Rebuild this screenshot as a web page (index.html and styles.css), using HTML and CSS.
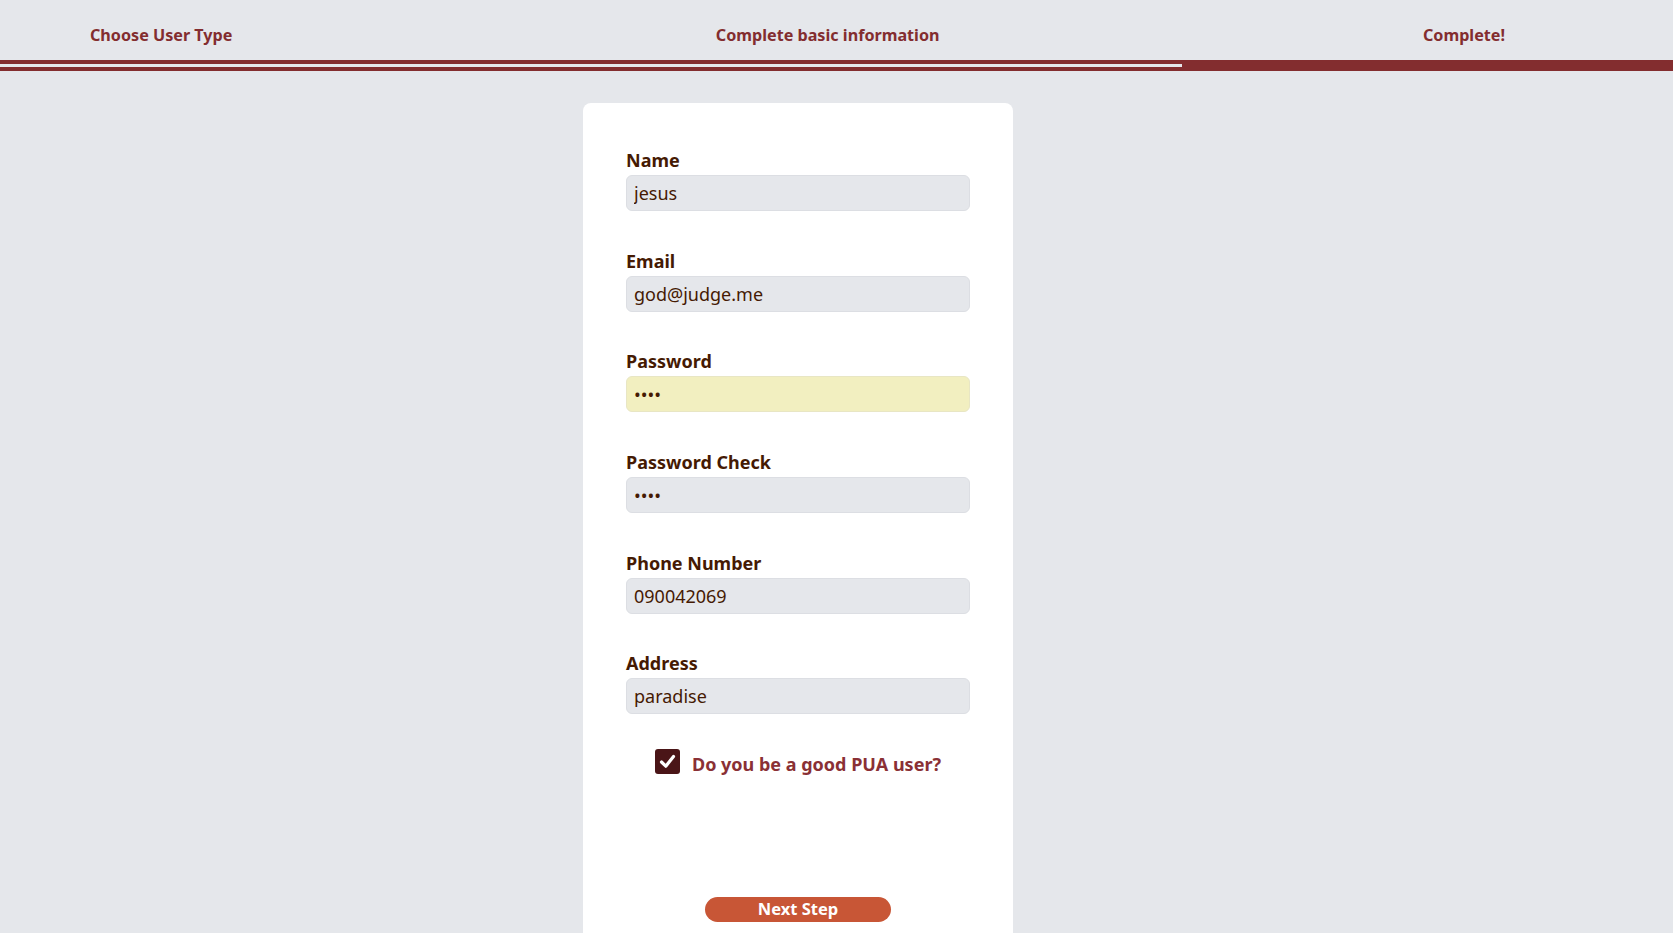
FILE: index.html
```html
<!DOCTYPE html>
<html lang="en">
<head>
<meta charset="utf-8">
<title>Sign up</title>
<link rel="stylesheet" href="styles.css">
</head>
<body>
<header class="stepper">
  <nav class="steps">
    <span class="step">Choose User Type</span>
    <span class="step">Complete basic information</span>
    <span class="step">Complete!</span>
  </nav>
  <div class="progress"><div class="progress-fill" style="width: 70.65%"></div></div>
</header>
<main class="main">
  <form class="card">
    <div class="field">
      <label class="label" for="name">Name</label>
      <input class="input" id="name" type="text" value="jesus">
    </div>
    <div class="field">
      <label class="label" for="email">Email</label>
      <input class="input" id="email" type="text" value="god@judge.me">
    </div>
    <div class="field">
      <label class="label" for="pw">Password</label>
      <input class="input input-autofill" id="pw" type="password" value="abcd">
    </div>
    <div class="field">
      <label class="label" for="pw2">Password Check</label>
      <input class="input" id="pw2" type="password" value="abcd">
    </div>
    <div class="field">
      <label class="label" for="phone">Phone Number</label>
      <input class="input" id="phone" type="text" value="090042069">
    </div>
    <div class="field">
      <label class="label" for="addr">Address</label>
      <input class="input" id="addr" type="text" value="paradise">
    </div>
    <div class="check-row">
      <span class="checkbox" aria-checked="true" role="checkbox">
        <svg width="25" height="25" viewBox="0 0 25 25"><rect x="0" y="0" width="25" height="25" rx="3" fill="#4a1517"/><polyline points="6.5,13 10.8,17.2 18.5,7.5" fill="none" stroke="#ffffff" stroke-width="3.2" stroke-linecap="round" stroke-linejoin="round"/></svg>
      </span>
      <span class="check-label">Do you be a good PUA user?</span>
    </div>
    <div class="actions">
      <button class="btn" type="button">Next Step</button>
    </div>
  </form>
</main>
</body>
</html>
```

FILE: styles.css
```css
html, body {
  margin: 0;
  padding: 0;
  overflow: hidden;
}

body {
  background: #e5e7eb;
  font-family: "Noto Sans", "Open Sans", sans-serif;
  color: #451a03;
}

.stepper {
  display: flex;
  flex-direction: column;
}

.steps {
  display: flex;
  justify-content: space-between;
  padding: 23px 168px 0 90px;
}

.step {
  font-size: 16.15px;
  line-height: 24px;
  font-weight: 700;
  color: #832d2f;
}

.progress {
  margin-top: 13px;
  height: 11px;
  box-sizing: border-box;
  padding-top: 4px;
  background: #832d2f;
}

.progress-fill {
  height: 3px;
  background: #e5e7eb;
}

.main {
  display: flex;
  justify-content: center;
  padding-right: 77px;
  padding-top: 32px;
}

.card {
  width: 430px;
  box-sizing: border-box;
  background: #ffffff;
  border-radius: 8px;
  padding: 44px 43px 60px;
  display: flex;
  flex-direction: column;
  gap: 36.7px;
}

.field {
  display: flex;
  flex-direction: column;
}

.label {
  font-size: 18px;
  line-height: 27px;
  font-weight: 700;
  color: #451a03;
  margin-bottom: 1px;
}

.input {
  height: 36px;
  box-sizing: border-box;
  border: 1px solid #dcdee3;
  border-radius: 6px;
  background: #e5e7eb;
  padding: 0 7px;
  font-family: "Noto Sans", sans-serif;
  font-size: 18px;
  color: #451a03;
  outline: none;
}

.input-autofill {
  background: #f2efc0;
  border-color: #e8e6c4;
}

.check-row {
  display: flex;
  justify-content: center;
  align-items: flex-start;
  gap: 12px;
  height: 25px;
  margin-top: -2px;
}

.checkbox {
  display: block;
  width: 25px;
  height: 25px;
}

.checkbox svg {
  display: block;
}

.check-label {
  font-size: 18px;
  line-height: 25px;
  font-weight: 700;
  color: #8a3035;
  margin-top: 3px;
}

.actions {
  display: flex;
  justify-content: center;
  margin-top: 86px;
}

.btn {
  width: 186px;
  height: 25px;
  border: none;
  border-radius: 999px;
  background: #c85636;
  color: #ffffff;
  font-family: "Noto Sans", sans-serif;
  font-size: 16.5px;
  line-height: 24px;
  font-weight: 700;
  padding: 0 0 1px;
}
```
